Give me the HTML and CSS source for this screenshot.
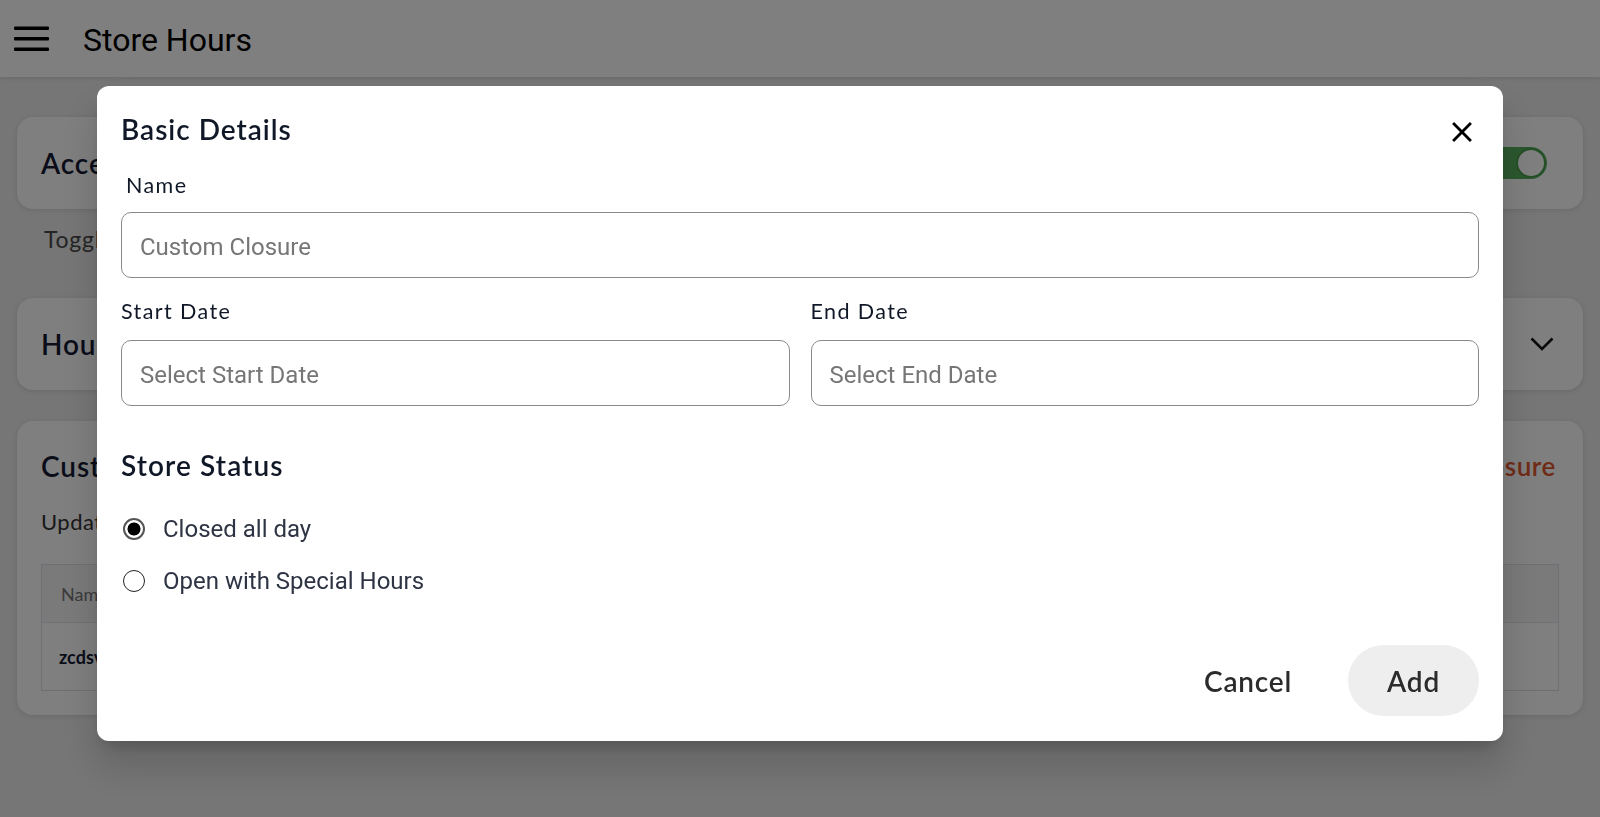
FILE: index.html
```html
<!DOCTYPE html>
<html lang="en">
<head>
<meta charset="utf-8">
<title>Store Hours</title>
<link rel="stylesheet" href="styles.css">
</head>
<body>
<div class="app">
  <header class="topbar">
    <svg class="menu-icon" viewBox="0 0 35 26" aria-hidden="true">
      <rect x="0" y="0.5" width="35" height="3.5" rx="1"/>
      <rect x="0" y="11" width="35" height="3.5" rx="1"/>
      <rect x="0" y="21.5" width="35" height="3.5" rx="1"/>
    </svg>
    <h1 class="page-title">Store Hours</h1>
  </header>

  <main class="content">
    <section class="card card-row">
      <h2 class="card-title">Accepting Orders</h2>
      <span class="toggle" aria-label="on"></span>
    </section>
    <p class="hint">Toggle to start or stop accepting online orders</p>

    <section class="card card-row">
      <h2 class="card-title">Hours</h2>
      <svg class="chevron" viewBox="0 0 24 14" aria-hidden="true">
        <polyline points="1.5,1.5 12,12 22.5,1.5"/>
      </svg>
    </section>

    <section class="card card-custom">
      <div class="custom-head">
        <h2 class="card-title">Custom Closures</h2>
        <a class="add-link">+ Add Custom Closure</a>
      </div>
      <p class="custom-sub">Update your store hours for holidays and special events</p>
      <table class="closures">
        <thead><tr><th>Name</th><th>Start Date</th><th>End Date</th><th>Status</th></tr></thead>
        <tbody><tr><td>zcdsv</td><td>12/25/2024</td><td>12/25/2024</td><td>Closed</td></tr></tbody>
      </table>
    </section>
  </main>
</div>

<div class="overlay">
  <div class="modal" role="dialog">
    <div class="modal-head">
      <h2 class="modal-title">Basic Details</h2>
      <button class="close" aria-label="Close">
        <svg viewBox="0 0 24 24"><path d="M19 6.41 17.59 5 12 10.59 6.41 5 5 6.41 10.59 12 5 17.59 6.41 19 12 13.41 17.59 19 19 17.59 13.41 12z"/></svg>
      </button>
    </div>

    <div class="field name-field">
      <label class="field-label indent">Name</label>
      <input class="input" type="text" placeholder="Custom Closure">
    </div>

    <div class="dates">
      <div class="field">
        <label class="field-label">Start Date</label>
        <input class="input" type="text" placeholder="Select Start Date">
      </div>
      <div class="field">
        <label class="field-label">End Date</label>
        <input class="input" type="text" placeholder="Select End Date">
      </div>
    </div>

    <h3 class="section-title">Store Status</h3>
    <div class="radios">
      <label class="radio-row"><input type="radio" name="status" checked><span>Closed all day</span></label>
      <label class="radio-row"><input type="radio" name="status"><span>Open with Special Hours</span></label>
    </div>

    <div class="actions">
      <button class="btn">Cancel</button>
      <button class="btn btn-add">Add</button>
    </div>
  </div>
</div>
</body>
</html>
```
FILE: styles.css
```css
html, body {
  margin: 0;
  padding: 0;
}
body {
  width: 1600px;
  height: 817px;
  overflow: hidden;
  background: #ececec;
  font-family: Lato, "Liberation Sans", sans-serif;
}

/* ---------- page behind ---------- */
.topbar {
  height: 77px;
  box-sizing: border-box;
  background: #ffffff;
  display: flex;
  align-items: center;
  padding-left: 14px;
  box-shadow: 0 1px 4px rgba(0, 0, 0, 0.12);
}
.menu-icon {
  width: 35px;
  height: 26px;
  margin-right: 34px;
  fill: #000;
}
.page-title {
  margin: 3px 0 0;
  font-family: Roboto, "Liberation Sans", sans-serif;
  font-weight: 400;
  font-size: 32px;
  color: #000;
}

.content {
  padding: 40px 17px 0;
}
.card {
  background: #fff;
  border-radius: 16px;
  box-shadow: 0 1px 5px rgba(0, 0, 0, 0.12);
}
.card-row {
  height: 92px;
  box-sizing: border-box;
  display: flex;
  align-items: center;
  justify-content: space-between;
  padding: 0 29px 0 24px;
}
.card-title {
  margin: 0;
  font-weight: 600;
  font-size: 28px;
  line-height: 34px;
  letter-spacing: 0.9px;
  color: #141a33;
}
.toggle {
  position: relative;
  width: 62px;
  height: 32px;
  border-radius: 16px;
  background: #57b05c;
  margin-right: 7px;
}
.toggle::after {
  content: "";
  position: absolute;
  right: 1px;
  top: 1px;
  width: 30px;
  height: 30px;
  box-sizing: border-box;
  border-radius: 50%;
  background: #fff;
  border: 2px solid #4a9e4f;
}
.chevron {
  width: 24px;
  height: 14px;
  fill: none;
  stroke: #111;
  stroke-width: 2.6;
}
.hint {
  margin: 18px 0 46px 27px;
  font-size: 23px;
  line-height: 25px;
  letter-spacing: 0.8px;
  color: #4a4a4a;
}
.card-custom {
  margin-top: 31px;
  padding: 28px 24px 24px 24px;
}
.custom-head {
  display: flex;
  align-items: center;
  justify-content: space-between;
}
.add-link {
  margin-right: 3px;
  font-weight: 600;
  font-size: 26px;
  color: #e0572f;
  letter-spacing: 0.6px;
}
.custom-sub {
  margin: 26px 0 29px;
  font-size: 22px;
  line-height: 26px;
  letter-spacing: 0.5px;
  color: #333;
}
.closures {
  width: 100%;
  border-collapse: collapse;
  border: 1px solid #dcdfea;
}
.closures th {
  height: 55px;
  background: #f4f4f6;
  text-align: left;
  padding-left: 19px;
  font-weight: 400;
  font-size: 18px;
  color: #777;
  border-bottom: 1px solid #e2e4ec;
}
.closures td {
  height: 65px;
  padding-left: 17px;
  font-weight: 700;
  font-size: 18px;
  color: #141a33;
}

/* ---------- modal ---------- */
.overlay {
  position: fixed;
  inset: 0;
  background: rgba(0, 0, 0, 0.5);
  display: flex;
  justify-content: center;
  align-items: flex-start;
  padding-top: 86px;
  box-sizing: border-box;
}
.modal {
  width: 1406px;
  box-sizing: border-box;
  background: #fff;
  border-radius: 12px;
  padding: 26px 24px 25px;
  box-shadow: 0 11px 15px -7px rgba(0, 0, 0, 0.2), 0 24px 38px 3px rgba(0, 0, 0, 0.14);
}
.modal-head {
  display: flex;
  justify-content: space-between;
  align-items: flex-start;
  height: 34px;
}
.modal-title {
  margin: 0;
  font-weight: 600;
  font-size: 28px;
  line-height: 34px;
  letter-spacing: 1px;
  color: #101828;
}
.close {
  width: 34px;
  height: 34px;
  margin-top: 3px;
  padding: 0;
  border: 0;
  background: none;
}
.close svg {
  width: 34px;
  height: 34px;
  fill: #000;
  display: block;
}
.field {
  display: flex;
  flex-direction: column;
}
.name-field {
  margin-top: 27px;
}
.field-label {
  font-weight: 400;
  font-size: 21.5px;
  line-height: 24px;
  letter-spacing: 1.4px;
  color: #101828;
  margin-bottom: 15px;
}
.indent {
  padding-left: 5px;
}
.dates .field-label {
  margin-bottom: 17px;
}
.input {
  width: 100%;
  height: 66px;
  box-sizing: border-box;
  border: 1px solid #8a8a8a;
  border-radius: 10px;
  padding: 3px 18px 0;
  font-family: Roboto, "Liberation Sans", sans-serif;
  font-size: 24px;
  color: #222;
  background: #fff;
  outline: none;
}
.input::placeholder {
  color: #767676;
}
.dates {
  display: grid;
  grid-template-columns: 1fr 1fr;
  column-gap: 21px;
  margin-top: 21px;
}
.section-title {
  margin: 42px 0 21px;
  font-weight: 600;
  font-size: 28px;
  line-height: 34px;
  letter-spacing: 1.1px;
  color: #101828;
}
.radio-row {
  display: flex;
  align-items: center;
  gap: 18px;
  height: 52px;
  padding-left: 2px;
  font-family: Roboto, "Liberation Sans", sans-serif;
  font-size: 24px;
  color: #2e3444;
}
.radio-row input {
  appearance: none;
  -webkit-appearance: none;
  margin: 0;
  width: 22px;
  height: 22px;
  box-sizing: border-box;
  border: 1.6px solid #222;
  border-radius: 50%;
  background: #fff;
}
.radio-row input:checked {
  border: 2.6px solid #555;
  background: radial-gradient(circle, #000 0 6.2px, #fff 6.8px);
}
.actions {
  display: flex;
  justify-content: flex-end;
  gap: 17px;
  margin-top: 38px;
}
.btn {
  height: 71px;
  padding: 0 39px;
  border: 0;
  border-radius: 36px;
  background: transparent;
  font-family: Lato, "Liberation Sans", sans-serif;
  font-weight: 600;
  font-size: 28px;
  letter-spacing: 0.8px;
  color: #2b2b2b;
}
.btn-add {
  background: #eeeeee;
}
```
